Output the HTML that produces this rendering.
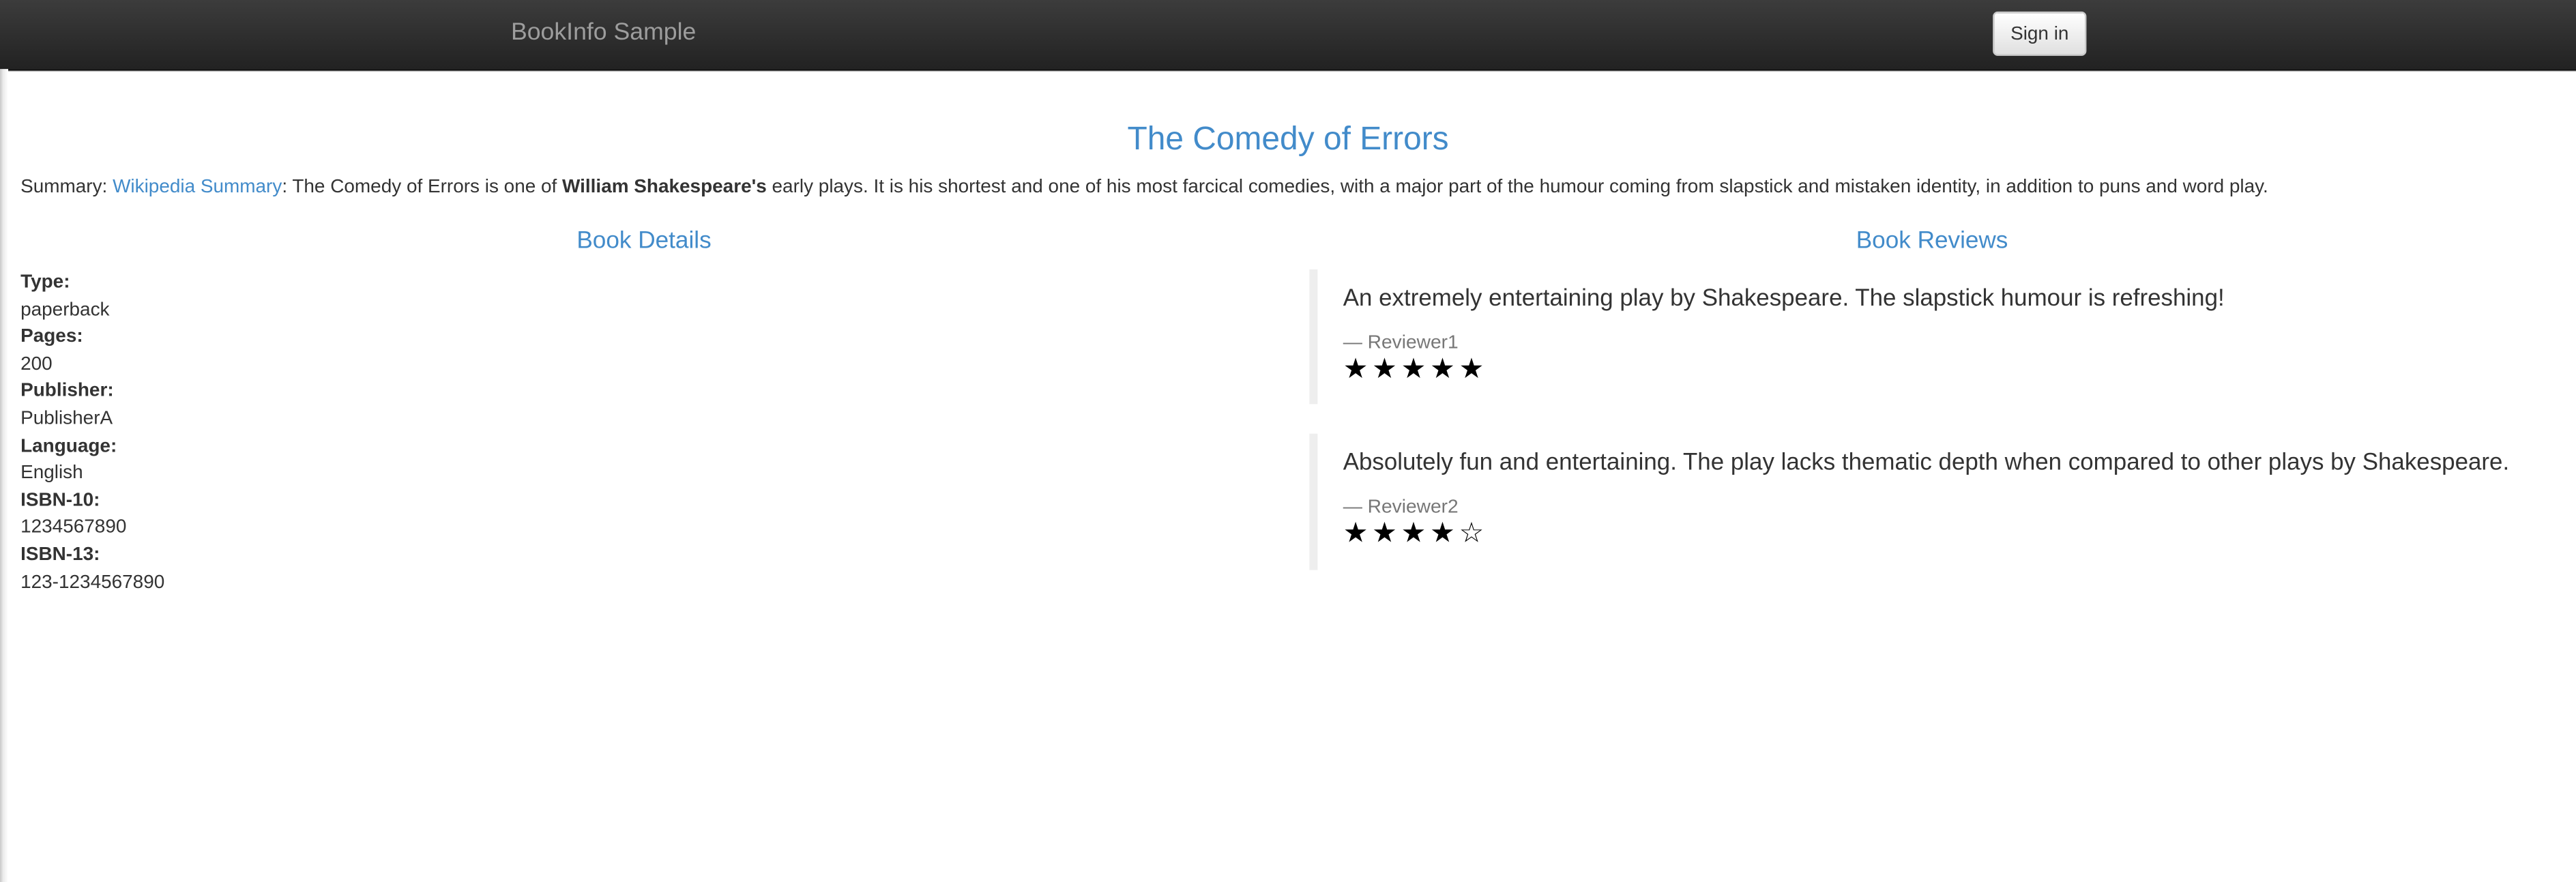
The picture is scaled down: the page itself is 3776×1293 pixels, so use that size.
<!DOCTYPE html>
<html><head><meta charset="utf-8">
<style>
html,body{margin:0;padding:0;width:3776px;height:1292px;overflow:hidden;background:#fff;}
#s{position:absolute;left:0;top:0;width:1568px;height:537px;transform:scale(2.4082);transform-origin:0 0;font-family:"Liberation Sans",Arial,sans-serif;color:#333;}
.nav{position:absolute;left:0;top:0;width:1568px;height:41.5px;background:linear-gradient(#3c3c3c,#222);border-bottom:0.6px solid #080808;box-shadow:0 0.6px 0 #bbb;}
.brand{position:absolute;left:311px;top:12px;font-size:14.8px;color:#9d9d9d;}
.btn{position:absolute;left:1213px;top:6.7px;width:57px;height:27.5px;box-sizing:border-box;border:1px solid #ccc;border-radius:3px;background:linear-gradient(#fff,#e0e0e0);font-size:11.6px;color:#333;text-align:center;line-height:25.5px;}
.shadow{position:absolute;left:0;top:42px;width:5px;height:495px;background:linear-gradient(90deg,#c8c8c8,#ececec 40%,#fff);}
.title{position:absolute;left:0;width:1568px;top:74px;text-align:center;font-size:19.9px;color:#428bca;}
.sum{position:absolute;left:12.5px;top:106.5px;font-size:11.6px;white-space:nowrap;}
a{color:#428bca;text-decoration:none;}
.h4{position:absolute;top:138.5px;font-size:14.6px;color:#428bca;text-align:center;width:784px;}
.dl{position:absolute;left:12.5px;top:164px;font-size:11.6px;line-height:16.6px;}
.dl b{display:block;}
.bq{position:absolute;left:797px;border-left:5px solid #eee;width:760px;}
.bq .t{position:absolute;left:15.5px;font-size:14.5px;white-space:nowrap;}
.bq .r{position:absolute;left:15.5px;font-size:11.7px;color:#777;}
.bq .st{position:absolute;left:15.5px;font-size:17px;color:#000;letter-spacing:2.4px;font-family:"DejaVu Sans",sans-serif;}
</style></head><body><div id="s">
<div class="nav"><div class="brand">BookInfo Sample</div><div class="btn">Sign in</div></div>
<div class="shadow"></div>
<div class="title">The Comedy of Errors</div>
<div class="sum">Summary: <a>Wikipedia Summary</a>: The Comedy of Errors is one of <b>William Shakespeare's</b> early plays. It is his shortest and one of his most farcical comedies, with a major part of the humour coming from slapstick and mistaken identity, in addition to puns and word play.</div>
<div class="h4" style="left:0">Book Details</div>
<div class="h4" style="left:784px">Book Reviews</div>
<div class="dl"><b>Type:</b>paperback<b>Pages:</b>200<b>Publisher:</b>PublisherA<b>Language:</b>English<b>ISBN-10:</b>1234567890<b>ISBN-13:</b>123-1234567890</div>
<div class="bq" style="top:164px;height:82px"><div class="t" style="top:9.5px">An extremely entertaining play by Shakespeare. The slapstick humour is refreshing!</div><div class="r" style="top:37.5px">— Reviewer1</div><div class="st" style="top:51px">★★★★★</div></div>
<div class="bq" style="top:264px;height:83px"><div class="t" style="top:9.5px">Absolutely fun and entertaining. The play lacks thematic depth when compared to other plays by Shakespeare.</div><div class="r" style="top:37.5px">— Reviewer2</div><div class="st" style="top:51px">★★★★☆</div></div>
</div></body></html>
